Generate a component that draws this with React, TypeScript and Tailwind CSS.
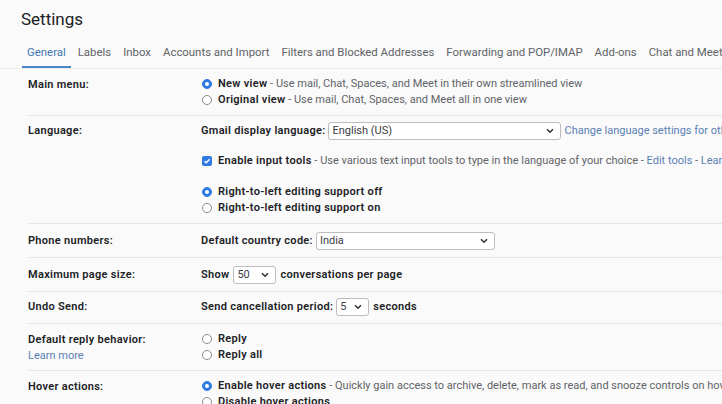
import React from "react";

const tabs = [
  "General",
  "Labels",
  "Inbox",
  "Accounts and Import",
  "Filters and Blocked Addresses",
  "Forwarding and POP/IMAP",
  "Add-ons",
  "Chat and Meet",
];

const bold = "font-semibold tracking-[0.3px] text-[#202124]";

function Radio({ on }: { on?: boolean }) {
  return (
    <span
      className={
        "inline-flex h-[10px] w-[10px] shrink-0 items-center justify-center rounded-full border " +
        (on ? "border-[#2f7be3] bg-[#2f7be3]" : "border-[#8a8a8a] bg-white")
      }
    >
      {on && <span className="h-[4px] w-[4px] rounded-full bg-white" />}
    </span>
  );
}

function Checkbox() {
  return (
    <span className="inline-flex h-[10px] w-[10px] shrink-0 items-center justify-center rounded-[2px] bg-[#2f7be3]">
      <svg width="8" height="8" viewBox="0 0 8 8">
        <path d="M1.5 4.2 3.2 5.8 6.6 2.2" fill="none" stroke="white" strokeWidth="1.4" />
      </svg>
    </span>
  );
}

function Select({ value, width }: { value: string; width: string }) {
  return (
    <span
      className={
        "inline-flex h-[18px] items-center justify-between rounded-[3px] border border-[#bdbdbd] bg-white pl-[3px] pr-[6px] font-normal text-[#3c4043] " +
        width
      }
    >
      <span>{value}</span>
      <svg width="8" height="6" viewBox="0 0 8 6">
        <path d="M1 1.2 4 4.2 7 1.2" fill="none" stroke="#333" strokeWidth="1.6" />
      </svg>
    </span>
  );
}

function Row({ label, link, pad = "py-[7px]", children }: { label: string; link?: string; pad?: string; children: React.ReactNode }) {
  return (
    <div className={"flex border-b border-[#e6e6e6] " + pad}>
      <div className="w-[173px] shrink-0 pt-[1px] leading-[16px]">
        <div className={bold}>{label}</div>
        {link && <div className="text-[#5a7fb4]">{link}</div>}
      </div>
      <div className="min-w-0 flex-1 overflow-hidden whitespace-nowrap leading-[16px]">{children}</div>
    </div>
  );
}

function Option({ on, title, desc }: { on?: boolean; title: string; desc?: string }) {
  return (
    <div className="flex h-[16px] items-center gap-[6px] pl-[1px]">
      <Radio on={on} />
      <span>
        <span className={bold}>{title}</span>
        {desc && <span className="text-[#5f6368]"> - {desc}</span>}
      </span>
    </div>
  );
}

export default function App() {
  return (
    <div
      className="h-[404px] w-[722px] overflow-hidden bg-[#fafafa] text-[11px] text-[#202124]"
      style={{ fontFamily: "Roboto, 'Open Sans', sans-serif" }}
    >
      {/* Title */}
      <div className="pl-[21px] pt-[7px] text-[17px] leading-[24px] text-[#202124]">Settings</div>

      {/* Tabs */}
      <div className="mt-[11px] flex gap-[2px] whitespace-nowrap border-b border-[#ececec] pl-[22px] text-[11.4px] text-[#5f6368]">
        {tabs.map((t, i) => (
          <div
            key={t}
            className={
              "px-[5px] pb-[6px] pt-[2px] leading-[16px] " +
              (i === 0 ? "border-b-[2px] border-[#4a86c5] text-[#3f78b5]" : "border-b-[2px] border-transparent")
            }
          >
            {t}
          </div>
        ))}
      </div>

      {/* Rows */}
      <div className="pl-[28px]">
        <Row label="Main menu:">
          <Option on title="New view" desc="Use mail, Chat, Spaces, and Meet in their own streamlined view" />
          <Option title="Original view" desc="Use mail, Chat, Spaces, and Meet all in one view" />
        </Row>

        <Row label="Language:" pad="pt-[6px] pb-[7px]">
          <div className="flex items-center">
            <span className={bold}>Gmail display language:</span>
            <span className="ml-[3px]">
              <Select value="English (US)" width="w-[233px]" />
            </span>
            <span className="ml-[3px] text-[#5a7fb4]">Change language settings for other Google products</span>
          </div>
          <div className="mt-[13px] flex h-[16px] items-center gap-[6px] pl-[1px]">
            <Checkbox />
            <span>
              <span className={bold}>Enable input tools</span>
              <span className="text-[#5f6368]"> - Use various text input tools to type in the language of your choice - </span>
              <span className="text-[#5a7fb4]">Edit tools</span>
              <span className="text-[#5f6368]"> - </span>
              <span className="text-[#5a7fb4]">Learn more</span>
            </span>
          </div>
          <div className="mt-[15px]">
            <Option on title="Right-to-left editing support off" />
            <Option title="Right-to-left editing support on" />
          </div>
        </Row>

        <Row label="Phone numbers:" pad="pt-[8px] pb-[7px]">
          <div className="flex items-center">
            <span className={bold}>Default country code:</span>
            <span className="ml-[3px]">
              <Select value="India" width="w-[179px]" />
            </span>
          </div>
        </Row>

        <Row label="Maximum page size:" pad="pt-[8px] pb-[7px]">
          <div className="flex items-center">
            <span className={bold}>Show</span>
            <span className="ml-[4px]">
              <Select value="50" width="w-[43px]" />
            </span>
            <span className={"ml-[4px] " + bold}>conversations per page</span>
          </div>
        </Row>

        <Row label="Undo Send:" pad="pt-[6px] pb-[7px]">
          <div className="flex items-center">
            <span className={bold}>Send cancellation period:</span>
            <span className="ml-[3px]">
              <Select value="5" width="w-[33px]" />
            </span>
            <span className={"ml-[4px] " + bold}>seconds</span>
          </div>
        </Row>

        <Row label="Default reply behavior:" link="Learn more" pad="pt-[7px] pb-[6px]">
          <Option title="Reply" />
          <Option title="Reply all" />
        </Row>

        <Row label="Hover actions:">
          <Option
            on
            title="Enable hover actions"
            desc="Quickly gain access to archive, delete, mark as read, and snooze controls on hover."
          />
          <Option title="Disable hover actions" />
        </Row>
      </div>
    </div>
  );
}
